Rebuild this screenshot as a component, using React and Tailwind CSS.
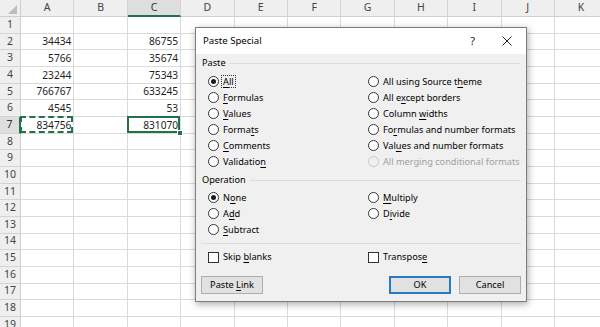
const cols = ['A', 'B', 'C', 'D', 'E', 'F', 'G', 'H', 'I', 'J', 'K']

const data = {
  2: ['34434', '86755'],
  3: ['5766', '35674'],
  4: ['23244', '75343'],
  5: ['766767', '633245'],
  6: ['4545', '53'],
  7: ['834756', '831070'],
}

// "&" marks the access key, the way Windows resource files do
function Label({ text }) {
  const i = text.indexOf('&')
  if (i < 0) return <>{text}</>
  return (
    <>
      {text.slice(0, i)}
      <span className="underline underline-offset-[1.5px] decoration-[0.8px]">{text[i + 1]}</span>
      {text.slice(i + 2)}
    </>
  )
}

function Radio({ text, checked, disabled, focus }) {
  return (
    <div className="flex items-center h-[16px]">
      <span
        className={`w-[11px] h-[11px] rounded-full border flex items-center justify-center ${
          disabled ? 'border-[#c8c8c8] bg-[#f0f0f0]' : 'border-[#333] bg-white'
        }`}
      >
        {checked && <span className="w-[5px] h-[5px] rounded-full bg-[#1a1a1a]"></span>}
      </span>
      {focus ? (
        <span className="ml-[2px] border border-dotted border-[#333] px-[1px] leading-[11px]">
          <Label text={text} />
        </span>
      ) : (
        <span className={`ml-[4px] ${disabled ? 'text-[#a0a0a0]' : ''}`}>
          <Label text={text} />
        </span>
      )}
    </div>
  )
}

function Check({ text }) {
  return (
    <div className="flex items-center h-[16px]">
      <span className="w-[11px] h-[11px] border border-[#333] bg-white"></span>
      <span className="ml-[4px]">
        <Label text={text} />
      </span>
    </div>
  )
}

function GroupLabel({ text }) {
  return (
    <div className="flex items-center h-[16px] pl-[6px] pr-[6px]">
      <span>{text}</span>
      <span className="flex-1 h-px bg-[#dcdcdc] ml-[4px]"></span>
    </div>
  )
}

function Sheet() {
  const rows = Array.from({ length: 19 }, (_, i) => i + 1)
  return (
    <div className="grid grid-cols-[21px_repeat(11,53.4px)] grid-rows-[17px] auto-rows-[16.67px] font-['Noto_Sans',sans-serif]">
      <div className="relative bg-[#efefef] border-r border-b border-[#cfcfcf]">
        <svg className="absolute right-[3px] bottom-[2px]" width="9" height="9" viewBox="0 0 9 9">
          <polygon points="9,0 9,9 0,9" fill="#bdbdbd" />
        </svg>
      </div>
      {cols.map((c) => (
        <div
          key={c}
          className={`flex items-center justify-center text-[10.5px] border-r border-[#d4d4d4] ${
            c === 'C'
              ? 'bg-[#dedede] text-[#333] border-b-2 border-b-[#217346]'
              : 'bg-[#efefef] text-[#444] border-b border-b-[#cfcfcf]'
          }`}
        >
          {c}
        </div>
      ))}
      {rows.map((r) => (
        <Row key={r} r={r} />
      ))}
    </div>
  )
}

function Row({ r }) {
  const vals = data[r]
  return (
    <>
      <div
        className={`flex items-center justify-center text-[10.5px] border-b border-[#d4d4d4] ${
          r === 7
            ? 'bg-[#dedede] text-[#333] border-r-2 border-r-[#217346]'
            : 'bg-[#efefef] text-[#444] border-r border-r-[#cfcfcf]'
        }`}
      >
        {r}
      </div>
      {cols.map((c) => {
        let v = ''
        if (vals && c === 'A') v = vals[0]
        if (vals && c === 'C') v = vals[1]
        return (
          <div
            key={c}
            className="relative flex items-center justify-end pr-[2px] pt-[1px] text-[10.2px] text-[#1e1e1e] border-r border-b border-[#dadada]"
          >
            {v}
            {r === 7 && c === 'A' && (
              <span className="absolute -top-px -left-px right-0 bottom-0 border-2 border-dashed border-[#217346]"></span>
            )}
            {r === 7 && c === 'C' && (
              <>
                <span className="absolute -top-px -left-px right-0 bottom-0 border-2 border-[#217346]"></span>
                <span className="absolute z-10 -right-[3px] -bottom-[3px] w-[6px] h-[6px] bg-[#217346] border border-white"></span>
              </>
            )}
          </div>
        )
      })}
    </>
  )
}

function PasteSpecial() {
  return (
    <div className="absolute z-20 left-[195px] top-[27px] w-[332px] h-[275px] flex flex-col bg-[#f0f0f0] border border-[#7d7d7d] shadow-[1px_2px_7px_rgba(0,0,0,0.35)] text-[9.2px] text-black font-['Noto_Sans',sans-serif]">
      {/* title bar */}
      <div className="h-[26px] bg-white flex items-center pl-[7px]">
        <span className="flex-1 text-[9.6px]">Paste Special</span>
        <span className="text-[11px] text-[#222] mr-[27px]">?</span>
        <svg className="mr-[14px]" width="10" height="10" viewBox="0 0 10 10">
          <path d="M0.5 0.5 L9.5 9.5 M9.5 0.5 L0.5 9.5" stroke="#222" strokeWidth="1" />
        </svg>
      </div>

      <div className="mt-px">
        <GroupLabel text="Paste" />
      </div>
      <div className="mt-[2.5px] grid grid-cols-[160px_1fr] pl-[12px]">
        <div className="flex flex-col">
          <Radio text="&All" checked focus />
          <Radio text="&Formulas" />
          <Radio text="&Values" />
          <Radio text="Forma&ts" />
          <Radio text="&Comments" />
          <Radio text="Validatio&n" />
        </div>
        <div className="flex flex-col">
          <Radio text="All using Source t&heme" />
          <Radio text="All e&xcept borders" />
          <Radio text="Column &widths" />
          <Radio text="Fo&rmulas and number formats" />
          <Radio text="Val&ues and number formats" />
          <Radio text="All merging conditional formats" disabled />
        </div>
      </div>

      <div className="mt-[2.5px]">
        <GroupLabel text="Operation" />
      </div>
      <div className="mt-[1.5px] grid grid-cols-[160px_1fr] pl-[12px]">
        <div className="flex flex-col">
          <Radio text="N&one" checked />
          <Radio text="A&dd" />
          <Radio text="&Subtract" />
        </div>
        <div className="flex flex-col">
          <Radio text="&Multiply" />
          <Radio text="D&ivide" />
        </div>
      </div>

      <div className="mt-[5.5px] mx-[5px] h-px bg-[#dcdcdc]"></div>

      <div className="mt-[5px] grid grid-cols-[160px_1fr] pl-[12px]">
        <Check text="Skip &blanks" />
        <Check text="Transpos&e" />
      </div>

      <div className="mt-[11px] flex items-center px-[5px]">
        <button className="w-[62px] h-[18px] bg-[#e1e1e1] border border-[#adadad] text-[9.2px]">
          <Label text="Paste &Link" />
        </button>
        <div className="flex-1"></div>
        <button className="w-[62px] h-[18px] bg-[#e1e1e1] border-2 border-[#2a79c4] text-[9.2px]">OK</button>
        <button className="ml-[8px] w-[62px] h-[18px] bg-[#e1e1e1] border border-[#adadad] text-[9.2px]">Cancel</button>
      </div>
    </div>
  )
}

export default function App() {
  return (
    <div className="relative w-[600px] h-[327px] overflow-hidden bg-white">
      <Sheet />
      <PasteSpecial />
    </div>
  )
}
